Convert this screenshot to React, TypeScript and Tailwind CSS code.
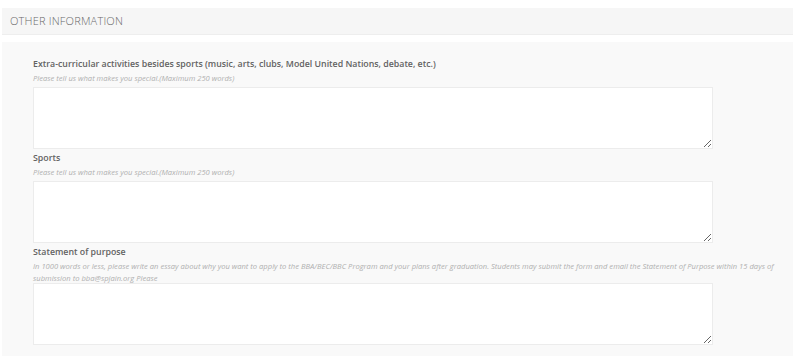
export default function App() {
    const fields = [
        {
            label: "Extra-curricular activities besides sports (music, arts, clubs, Model United Nations, debate, etc.)",
            hint: "Please tell us what makes you special.(Maximum 250 words)",
            gap: "mb-[3px]",
        },
        {
            label: "Sports",
            hint: "Please tell us what makes you special.(Maximum 250 words)",
            gap: "mb-[3px]",
        },
        {
            label: "Statement of purpose",
            hint: "In 1000 words or less, please write an essay about why you want to apply to the BBA/BEC/BBC Program and your plans after graduation. Students may submit the form and email the Statement of Purpose within 15 days of submission to bba@spjain.org Please",
            gap: "mb-[-1px]",
        },
    ];

    return (
        <div className="w-[793px] h-[356px] overflow-hidden bg-white pt-2 pl-[2px] font-['Open_Sans',sans-serif]">
            <div className="h-[27px] bg-[#f6f6f6] border-b border-[#eeeeee] flex items-center pl-2">
                <h3 className="text-[11px] font-light tracking-[0.2px] text-[#6a6a6a] uppercase">Other Information</h3>
            </div>
            <div className="mt-[7px] bg-[#f9f9f9] pl-[31px] pr-[12px] pt-[14px] pb-4 min-h-[320px]">
                {fields.map((f) => (
                    <div key={f.label} className="flex flex-col">
                        <label className="text-[8.8px] leading-[16px] font-semibold text-[#626262]">{f.label}</label>
                        <p className={`text-[7.6px] leading-[12px] italic text-[#b0b0b0] ${f.gap}`}>{f.hint}</p>
                        <textarea className="w-[680px] h-[62px] bg-white border border-[#ececec] outline-none mb-[1px] resize-y" />
                    </div>
                ))}
            </div>
        </div>
    );
}
